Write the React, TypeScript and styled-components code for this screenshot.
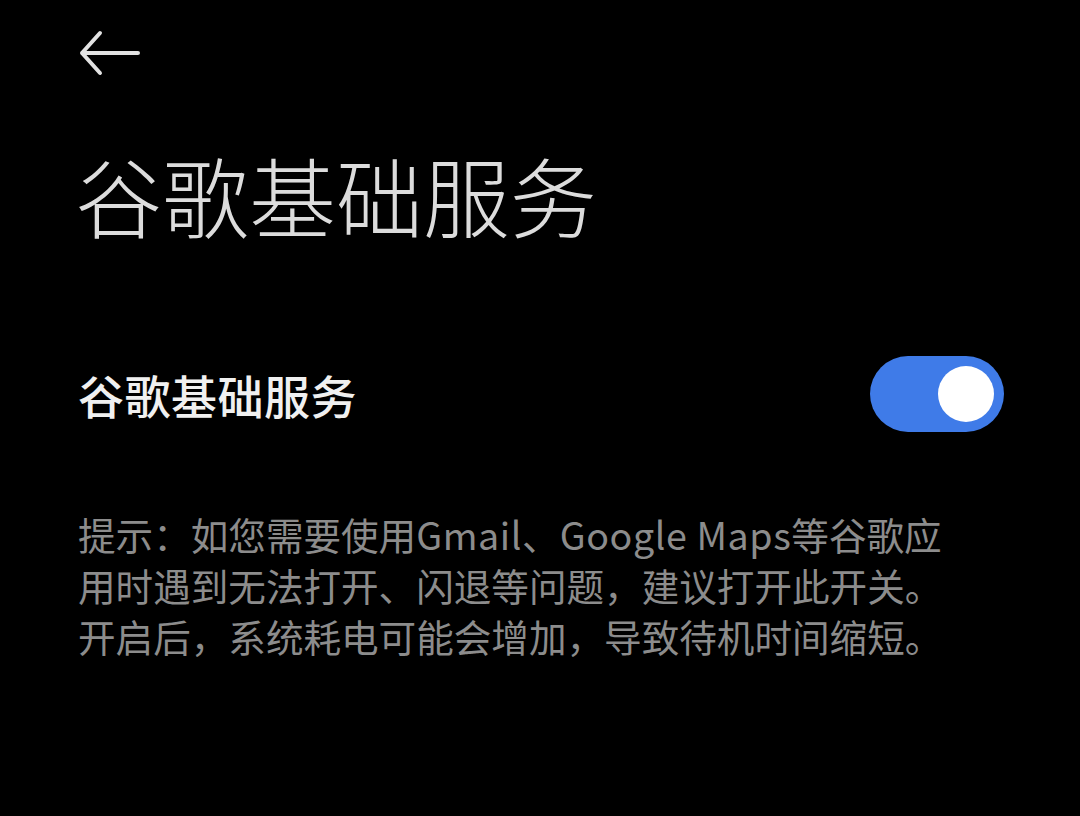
import * as React from "react";
import styled, { createGlobalStyle } from "styled-components";

const GlobalStyle = createGlobalStyle`
  html, body {
    margin: 0;
    padding: 0;
    background: #000;
  }
  body {
    font-family: "Noto Sans CJK SC", "Noto Sans", sans-serif;
  }
`;

const Screen = styled.div`
  width: 1080px;
  height: 816px;
  background: #000;
  padding: 0 76px 0 78px;
  box-sizing: border-box;
  display: flex;
  flex-direction: column;
`;

const TopBar = styled.div`
  height: 106px;
  display: flex;
  align-items: center;
`;

const BackButton = styled.button`
  border: 0;
  background: none;
  padding: 0;
  display: flex;
  color: #e2e2e2;
  cursor: pointer;
`;

const Title = styled.h1`
  margin: 28px 0 0 -3px;
  font-size: 87px;
  line-height: 120px;
  font-weight: 300;
  color: #dcdcdc;
`;

const SettingRow = styled.div`
  margin-top: 102px;
  height: 76px;
  display: flex;
  align-items: center;
  justify-content: space-between;
`;

const RowLabel = styled.span`
  font-size: 46px;
  font-weight: 500;
  letter-spacing: 0.5px;
  color: #f0f0f0;
`;

const Track = styled.button<{ $on: boolean }>`
  width: 134px;
  height: 76px;
  border: 0;
  padding: 0 10px;
  border-radius: 38px;
  background: ${(p) => (p.$on ? "#3f7be8" : "#3a3a3a")};
  display: flex;
  align-items: center;
  justify-content: ${(p) => (p.$on ? "flex-end" : "flex-start")};
  cursor: pointer;
`;

const Knob = styled.span`
  width: 56px;
  height: 56px;
  border-radius: 50%;
  background: #fff;
`;

const Hint = styled.p`
  margin: 76px 0 0 0;
  font-size: 37.6px;
  line-height: 51px;
  color: #8c8c8c;
  white-space: nowrap;
`;

const Latin = styled.span`
  letter-spacing: 0.6px;
`;

function BackArrow() {
  return (
    <svg width="62" height="46" viewBox="0 0 62 46" fill="none">
      <path
        d="M22 3 L4 23 L22 43 M4 23 H60"
        stroke="currentColor"
        strokeWidth="4"
        strokeLinecap="round"
        strokeLinejoin="round"
      />
    </svg>
  );
}

export default function App() {
  const [on, setOn] = React.useState(true);

  return (
    <Screen>
      <GlobalStyle />
      <TopBar>
        <BackButton aria-label="返回">
          <BackArrow />
        </BackButton>
      </TopBar>
      <Title>谷歌基础服务</Title>
      <SettingRow>
        <RowLabel>谷歌基础服务</RowLabel>
        <Track $on={on} onClick={() => setOn(!on)} aria-pressed={on}>
          <Knob />
        </Track>
      </SettingRow>
      <Hint>
        提示：如您需要使用<Latin>Gmail</Latin>、<Latin>Google Maps</Latin>等谷歌应
        <br />
        用时遇到无法打开、闪退等问题，建议打开此开关。
        <br />
        开启后，系统耗电可能会增加，导致待机时间缩短。
      </Hint>
    </Screen>
  );
}
